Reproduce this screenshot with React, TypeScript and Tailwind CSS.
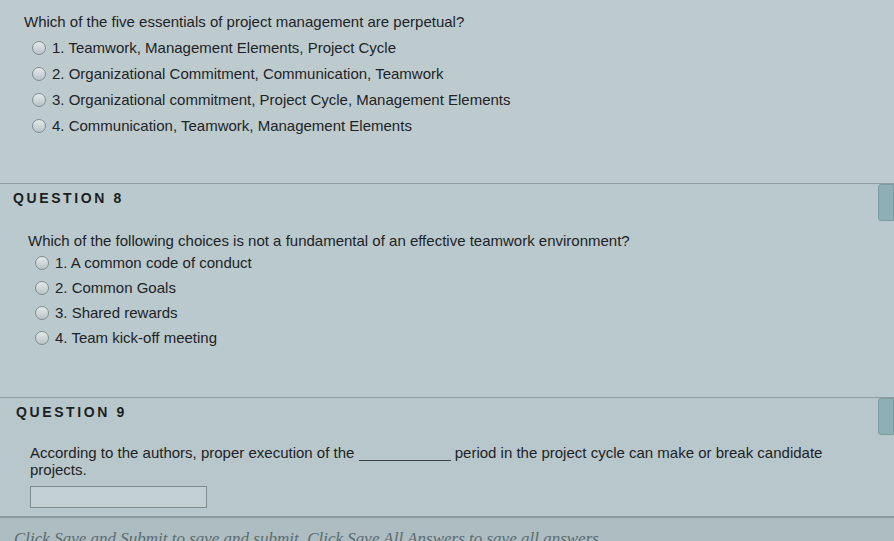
import React from 'react';

const Radio: React.FC = () => (
  <span className="inline-block w-[14px] h-[14px] rounded-full border border-[#7f8c90] bg-gradient-to-b from-[#e4eaec] to-[#b9c4c7] shrink-0" />
);

const Option: React.FC<{ label: string; h: string }> = ({ label, h }) => (
  <div className={`flex items-center gap-[6px] ${h}`}>
    <Radio />
    <span>{label}</span>
  </div>
);

const SideTab: React.FC = () => (
  <div className="absolute right-0 top-0 w-[16px] h-[37px] bg-[#8eafb5] border border-[#7d9ca2] rounded-l-[3px]" />
);

export default function App() {
  const q7 = [
    '1. Teamwork, Management Elements, Project Cycle',
    '2. Organizational Commitment, Communication, Teamwork',
    '3. Organizational commitment, Project Cycle, Management Elements',
    '4. Communication, Teamwork, Management Elements',
  ];
  const q8 = [
    '1. A common code of conduct',
    '2. Common Goals',
    '3. Shared rewards',
    '4. Team kick-off meeting',
  ];

  return (
    <div className="w-[894px] h-[541px] overflow-hidden bg-[#bac9cd] text-[#1d2326] text-[15px] leading-[18px] font-['Liberation_Sans',Arial,sans-serif]">
      {/* question 7 (tail) */}
      <div className="h-[183px] pt-[13px] pl-[24px] bg-[#bdcbcf]">
        <p>Which of the five essentials of project management are perpetual?</p>
        <div className="mt-[4px] pl-[8px]">
          {q7.map((o) => (
            <Option key={o} label={o} h="h-[26px]" />
          ))}
        </div>
      </div>

      {/* question 8 */}
      <div className="relative h-[214px] border-t border-[#8c9ca1]">
        <SideTab />
        <div className="pt-[5px] pl-[13px] font-bold tracking-[2.6px] text-[14px] text-[#1a1f22]">QUESTION 8</div>
        <div className="pt-[25px] pl-[28px]">
          <p>Which of the following choices is not a fundamental of an effective teamwork environment?</p>
          <div className="mt-[0px] pl-[7px]">
            {q8.map((o) => (
              <Option key={o} label={o} h="h-[25px]" />
            ))}
          </div>
        </div>
      </div>

      {/* question 9 */}
      <div className="relative h-[119px] border-t border-[#8c9ca1] bg-[#b8c7cb]">
        <SideTab />
        <div className="pt-[5px] pl-[16px] font-bold tracking-[2.6px] text-[14px] text-[#1a1f22]">QUESTION 9</div>
        <div className="pt-[23px] pl-[30px] pr-[60px] leading-[17px]">
          <p>
            According to the authors, proper execution of the{' '}
            <span className="inline-block w-[92px] border-b border-[#3a4245] align-[-3px]" />{' '}
            period in the project cycle can make or break candidate projects.
          </p>
          <div className="mt-[8px] w-[177px] h-[22px] border border-[#7e8c90] bg-[#c3d0d3]" />
        </div>
      </div>

      {/* footer */}
      <div className="h-[26px] border-t-2 border-[#8a999d] bg-[#adbdc1] pt-[11px] pl-[14px] text-[17px] leading-[20px] italic text-[#5b6b70] font-['Liberation_Serif','Times_New_Roman',serif] whitespace-nowrap">
        Click Save and Submit to save and submit. Click Save All Answers to save all answers.
      </div>
    </div>
  );
}
